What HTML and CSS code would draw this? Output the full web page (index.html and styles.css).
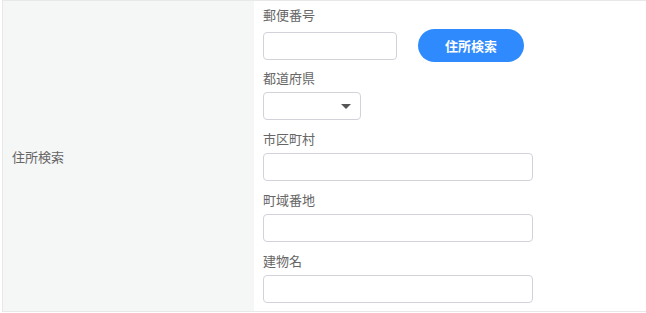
FILE: index.html
```html
<!DOCTYPE html>
<html lang="ja">
  <head>
    <meta charset="UTF-8" />
    <meta name="viewport" content="width=device-width, initial-scale=1.0" />
    <title>住所検索</title>
    <link rel="stylesheet" href="styles.css">
  </head>
  <body>
    <div class="form-table">
      <div class="form-head">住所検索</div>
      <div class="form-body">
        <div class="field">
          <p class="field-label">郵便番号</p>
          <div class="zip-row">
            <input type="text" class="input input-zip" />
            <button class="search-btn">住所検索</button>
          </div>
        </div>
        <div class="field">
          <p class="field-label">都道府県</p>
          <div class="select-wrap">
            <select class="input input-pref"></select>
          </div>
        </div>
        <div class="field">
          <p class="field-label">市区町村</p>
          <input type="text" class="input input-wide" />
        </div>
        <div class="field">
          <p class="field-label">町域番地</p>
          <input type="text" class="input input-wide" />
        </div>
        <div class="field">
          <p class="field-label">建物名</p>
          <input type="text" class="input input-wide" />
        </div>
      </div>
    </div>
  </body>
</html>
```

FILE: styles.css
```css
body {
  margin: 0;
  font-family: 'Noto Sans CJK JP', 'Noto Sans', sans-serif;
  color: #666;
  background-color: #fff;
}

.form-table {
  display: flex;
  margin-left: 2px;
  border: 1px solid #e8e8e8;
  border-right: none;
}

.form-head {
  width: 251px;
  padding-left: 9px;
  box-sizing: border-box;
  display: flex;
  align-items: center;
  background-color: #f5f6f6;
  font-size: 13px;
}

.form-body {
  flex: 1;
  padding: 5px 0 8px 9px;
  display: flex;
  flex-direction: column;
  gap: 10px;
}

.field {
  display: flex;
  flex-direction: column;
  gap: 5px;
}

.field:first-child {
  margin-bottom: -3px;
}

.field-label {
  margin: 0;
  font-size: 13px;
  line-height: 18px;
}

.zip-row {
  display: flex;
  align-items: center;
  height: 33px;
}

.input {
  height: 28px;
  border: 1px solid #d2d3da;
  border-radius: 4px;
  box-sizing: border-box;
  background-color: #fff;
  font-family: inherit;
}

.input-zip {
  width: 134px;
}

.input-wide {
  width: 270px;
}

.search-btn {
  margin-left: 21px;
  width: 106px;
  height: 33px;
  border: none;
  border-radius: 17px;
  background-color: #2f8bfd;
  color: #fff;
  font-family: inherit;
  font-size: 13px;
  font-weight: bold;
  cursor: pointer;
}

.select-wrap {
  position: relative;
  width: 98px;
}

.input-pref {
  width: 98px;
  appearance: none;
  -webkit-appearance: none;
}

.select-wrap::after {
  content: '';
  position: absolute;
  right: 10px;
  top: 12px;
  border-left: 5px solid transparent;
  border-right: 5px solid transparent;
  border-top: 5px solid #555;
  pointer-events: none;
}
```
